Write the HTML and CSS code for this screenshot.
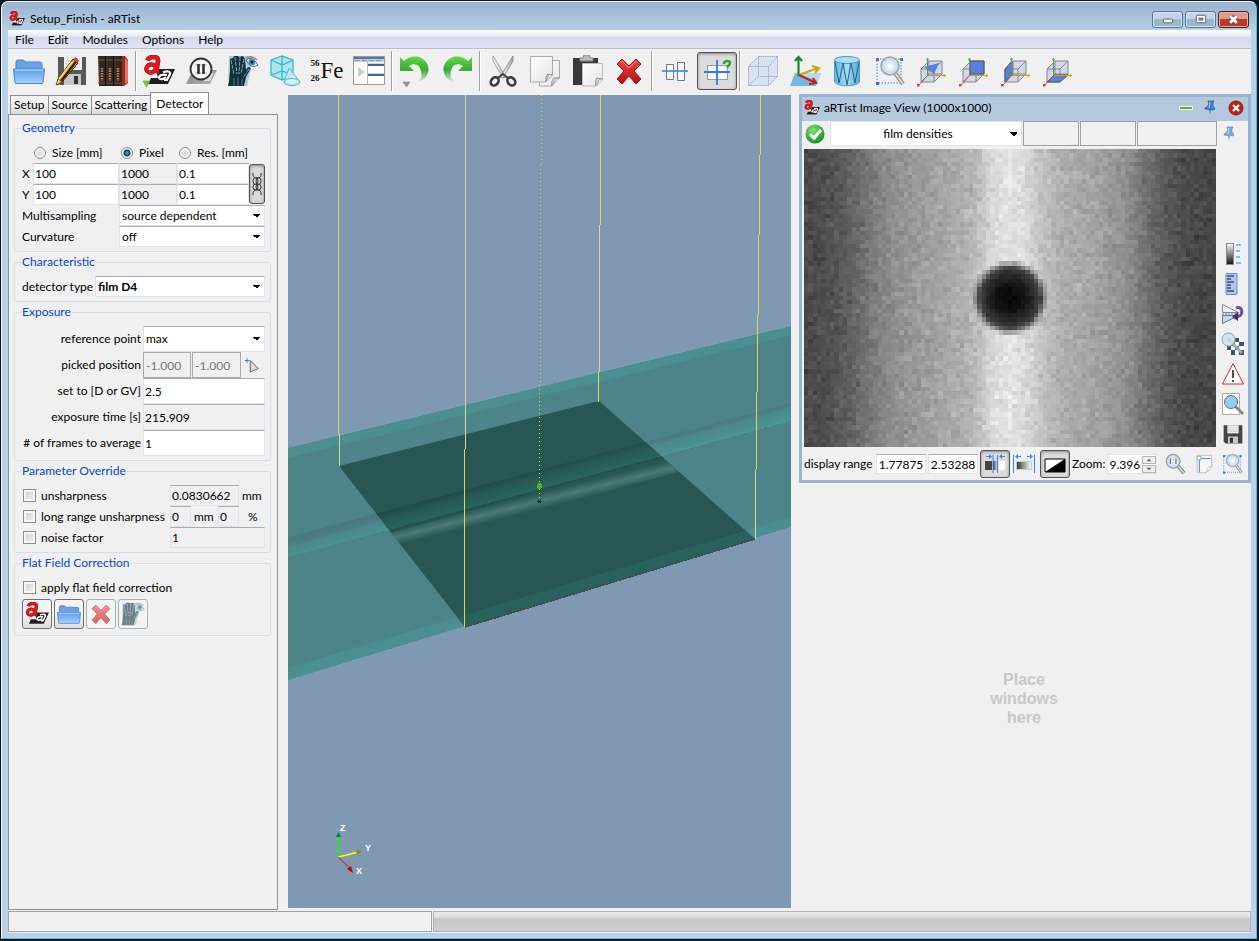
FILE: index.html
```html
<!DOCTYPE html>
<html lang="en">
<head>
<meta charset="utf-8">
<title>Setup_Finish - aRTist</title>
<link rel="stylesheet" href="styles.css">
</head>
<body>
<svg class="defs" aria-hidden="true">
  <defs>
    <linearGradient id="gFolder" x1="0" y1="0" x2="0" y2="1"><stop offset="0" stop-color="#5d9df0"/><stop offset="1" stop-color="#a9d0fb"/></linearGradient>
    <linearGradient id="gGreen" x1="0" y1="0" x2="0" y2="1"><stop offset="0" stop-color="#5fdc3e"/><stop offset=".5" stop-color="#3aa838"/><stop offset="1" stop-color="#3aa838" stop-opacity="0"/></linearGradient>
    <linearGradient id="gRed" x1="0" y1="0" x2="0" y2="1"><stop offset="0" stop-color="#ee4a45"/><stop offset="1" stop-color="#b80a0a"/></linearGradient>
    <linearGradient id="gPaper" x1="0" y1="0" x2="1" y2="1"><stop offset="0" stop-color="#fff"/><stop offset="1" stop-color="#e4e4e4"/></linearGradient>
    <linearGradient id="gCyl" x1="0" y1="0" x2="1" y2="0"><stop offset="0" stop-color="#58b8e4"/><stop offset=".5" stop-color="#a5dcf5"/><stop offset="1" stop-color="#4fa8d8"/></linearGradient>
    <linearGradient id="gGrayH" x1="0" y1="0" x2="1" y2="0"><stop offset="0" stop-color="#333"/><stop offset="1" stop-color="#fff"/></linearGradient>
    <linearGradient id="gGrayV" x1="0" y1="0" x2="0" y2="1"><stop offset="0" stop-color="#fff"/><stop offset="1" stop-color="#111"/></linearGradient>
    <linearGradient id="gBlade" x1="0" y1="0" x2="1" y2="0"><stop offset="0" stop-color="#fff"/><stop offset="1" stop-color="#aaa"/></linearGradient>
    <linearGradient id="gShadow" x1="0" y1="0" x2="1" y2="1"><stop offset="0" stop-color="#808080"/><stop offset="1" stop-color="#b4b4b4"/></linearGradient>
    <radialGradient id="gLens"><stop offset="0" stop-color="#fff"/><stop offset="1" stop-color="#b9d3e6"/></radialGradient>
    <radialGradient id="gOk" cx=".4" cy=".3" r=".8"><stop offset="0" stop-color="#7de070"/><stop offset="1" stop-color="#118a1c"/></radialGradient>

    <symbol id="logo" viewBox="0 0 32 32">
      <path d="M13 14h19l-7 15H5z" fill="#fff"/>
      <path d="M13 14h19l-7 15H5l3-6h7z" fill="#1c1c1c"/>
      <path d="M20 17c4-1 8-1 7 2l-3 6h-3M24 20c-4-1-8 0-8 2.500s5 2 7-.5" fill="none" stroke="#fff" stroke-width="2.200"/>
      <path d="M4.500 5.500q1-3.500 6-3.500t4.500 4l-1.500 9q0 2 2.500 1.500" fill="none" stroke="#7d0808" stroke-width="4.600"/><ellipse cx="8" cy="13.500" rx="4.800" ry="4" transform="rotate(-15 8 13.500)" fill="none" stroke="#7d0808" stroke-width="4.200"/>
      <path d="M4.500 5.500q1-3.500 6-3.500t4.500 4l-1.500 9q0 2 2.500 1.500" fill="none" stroke="#e8151a" stroke-width="3.800"/><ellipse cx="8" cy="13.500" rx="4.800" ry="4" transform="rotate(-15 8 13.500)" fill="none" stroke="#e8151a" stroke-width="3.400"/>
    </symbol>
    <symbol id="folder" viewBox="0 0 32 32">
      <path d="M3 7q0-2 2-2h5l3 2h14q2 0 2 2v7H3z" fill="#6aa2e8" stroke="#4a80c8"/>
      <path d="M.5 14h31l-1.500 13.500q0 1-1 1H3q-1 0-1-1z" fill="url(#gFolder)" stroke="#4b86d3"/>
      <path d="M2 15h28" stroke="#c8e2ff"/>
    </symbol>
    <symbol id="disk" viewBox="0 0 32 32">
      <path d="M1 2h30v29H4l-3-3z" fill="#454547"/>
      <path d="M7 2h18v13H7z" fill="#eceff3"/><path d="M7 6h18M7 9h18M7 12h18" stroke="#c2ccd6"/>
      <path d="M8 20h16v11H8z" fill="#c9c9cc"/><path d="M11 22h5v8h-5z" fill="#333"/>
    </symbol>
    <symbol id="save" viewBox="0 0 32 32">
      <path d="M3 2h28v28H5l-2-2z" fill="#58585a"/><path d="M9 2h18v13H9z" fill="#eef2f5"/>
      <path d="M11 6h14M11 9h14M11 12h14" stroke="#c4d0dc"/><path d="M9 19h17v11H9z" fill="#c5c5c8"/><path d="M19 21h4v8h-4z" fill="#333"/>
      <path d="M18 4l5 4L7 27l-5 3 1-6z" fill="#f3b91f" stroke="#2c2000"/><path d="M17 7L4 24" stroke="#ffe069" stroke-width="1.500"/>
      <path d="M21 6.500L6 26" stroke="#1d1a10" stroke-width="2.200"/><path d="M18 4l3-2 3 4-2 2z" fill="#e33"/><path d="M1 30l2-6 4 3z" fill="#f0d060" stroke="#443311" stroke-width=".6"/>
    </symbol>
    <symbol id="books" viewBox="0 0 32 32">
      <path d="M25 1h3l3 4v23l-4 3h-3z" fill="#a92420"/><path d="M28 3l3 3v21l-3 2z" fill="#cf7a6a"/>
      <path d="M1 1h7v30H2zM9 1h7v30H9zM17 1h8v30h-8z" fill="#33261e"/>
      <path d="M1 5h7M1 28h7M9 5h7M9 28h7M17 5h8M17 28h8" stroke="#7a5a42"/>
      <path d="M2.500 2v28M10.500 2v28M18.500 2v28" stroke="#4b382c"/>
      <path d="M5 13v13M13 13v13M21 13v13" stroke="#b8805e" stroke-width="2.500" stroke-dasharray="1.500 1"/>
      <path d="M8.500 1v30M16.500 1v30" stroke="#120b07"/>
    </symbol>
    <symbol id="pause" viewBox="0 0 32 32">
      <path d="M8 15h24l-7 14H1z" fill="url(#gShadow)"/><path d="M23 18h6l-4 8h-6z" fill="#dedede"/>
      <circle cx="16" cy="14" r="10.500" fill="#f4f4f4" stroke="#333" stroke-width="1.800"/>
      <path d="M10 10h12M10 18h12" stroke="#bbb"/><path d="M13.500 9v10M18.500 9v10" stroke="#333" stroke-width="2.600"/>
    </symbol>
    <symbol id="hand" viewBox="0 0 32 32">
      <path d="M2 1h19l3 14-4 16H1z" fill="#aecdd6"/>
      <path d="M1 31c2-6 1-10 2-14L3 4l3-1 1-2h4l1 1 4-1 2 3 1 11 2-3 3 1-5 9-2 9z" fill="#12303e"/>
      <path d="M4 5l3 14M8 2l2 17M13 2l-1 17M17 4l-3 15M22 14l-6 9" stroke="#7fa9b7" stroke-width="1" stroke-dasharray="4 1"/>
      <path d="M7 23v8M11 22v9M15 24v7" stroke="#4c7c8c"/>
      <path d="M19 5q6-5 12 5-7 5-12-5z" fill="#eef5f8" stroke="#666"/><circle cx="25" cy="7" r="3.500" fill="#3c8dbd"/><circle cx="25" cy="7" r="1.500" fill="#123"/><path d="M19 3q6-3 11 2" fill="none" stroke="#a58a72" stroke-width="1.500"/>
    </symbol>
    <symbol id="solids" viewBox="0 0 32 32">
      <path d="M2 5l11-4 11 4v15l-11 5-11-5z" fill="#aee4ee"/><path d="M2 5l11 5 11-5M13 10v15M2 5l11-4 11 4v15l-11 5-11-5zM2 20l11-4 11 4M13 1v15" fill="none" stroke="#35b6d2" stroke-width="1.300"/>
      <path d="M20 13l-5 14q6 6 16 0z" fill="#c5ecf3" fill-opacity=".9" stroke="#55b9cd"/><ellipse cx="23" cy="27" rx="8" ry="3.500" fill="#d8f1f5" fill-opacity=".7" stroke="#55b9cd"/>
    </symbol>
    <symbol id="panel" viewBox="0 0 32 32">
      <path d="M.5 1.500h31v28H.5z" fill="#fff" stroke="#999"/><path d="M1 2h30v2H1z" fill="#5277aa"/><path d="M1 4h30v3H1z" fill="#c3cad4"/><path d="M2 5.500h26" stroke="#8d98a8" stroke-dasharray="5 2"/>
      <path d="M14.500 7v22" stroke="#bbb"/><path d="M15 8h16v3H15zM15 18h16v3H15z" fill="#cad5e6"/><path d="M15 10h16M15 20h16" stroke="#41679d" stroke-width="2"/><path d="M5 12l7 5-7 5z" fill="#b6dcb8"/>
    </symbol>
    <symbol id="undo" viewBox="0 0 32 32">
      <path d="M1 2v14h14l-5-5c6-4 14-1 12 12l-4 5c13-4 16-19 4-25C16 0 9 2 5 6z" fill="url(#gGreen)"/><path d="M4 27h7l-3.500 5z" fill="#999" stroke="#777" stroke-width=".5"/>
    </symbol>
    <symbol id="redo" viewBox="0 0 32 32">
      <path d="M31 2v14H17l5-5c-6-4-14-1-12 12l4 5C1 24-2 9 10 3c6-3 13-1 17 3z" fill="url(#gGreen)"/>
    </symbol>
    <symbol id="cut" viewBox="0 0 32 32">
      <path d="M6 1l13 21-3 1L6 6z" fill="url(#gBlade)" stroke="#888" stroke-width=".7"/><path d="M26 1L13 22l3 1L26 6z" fill="url(#gBlade)" stroke="#777" stroke-width=".7"/>
      <ellipse cx="8" cy="26.500" rx="3.500" ry="4.500" transform="rotate(40 8 26)" fill="none" stroke="#3c3f42" stroke-width="2.600"/><ellipse cx="24" cy="26.500" rx="3.500" ry="4.500" transform="rotate(-40 24 26)" fill="none" stroke="#3c3f42" stroke-width="2.600"/>
      <path d="M11 23l5-4 5 4" fill="none" stroke="#3c3f42" stroke-width="2"/>
    </symbol>
    <symbol id="copy" viewBox="0 0 32 32">
      <path d="M10.500 5.500h20V23l-8 8h-12z" fill="url(#gPaper)" stroke="#aaa"/><path d="M1.500 1.500h22V20l-7 7h-15z" fill="url(#gPaper)" stroke="#aaa"/>
      <path d="M23.500 20c-5-2-4 2-7 7q0-6 2-8z" fill="#ddd" stroke="#999"/><path d="M30.500 23c-5-2-4 3-8 8q0-6 2-8z" fill="#ddd" stroke="#999"/>
    </symbol>
    <symbol id="paste" viewBox="0 0 32 32">
      <path d="M2 3h25v27H2z" fill="#39393b"/><path d="M9 3h3l1-3h5l1 3h3v3H9z" fill="#bbb" stroke="#888"/>
      <path d="M11.500 8.500h20V25l-6 6h-14z" fill="url(#gPaper)" stroke="#bbb"/><path d="M31.500 24c-5-1-3 3-7 7q0-6 1-8z" fill="#ddd" stroke="#999"/>
    </symbol>
    <symbol id="del" viewBox="0 0 32 32">
      <path d="M9 4l7 7 7-7 5 5-7 7 7 8-5 5-7-8-7 8-5-5 7-8-7-7z" fill="url(#gRed)" stroke="#9c1414" stroke-linejoin="round"/><path d="M9 6l7 7 7-7" fill="none" stroke="#ffaaa5" stroke-opacity=".7"/>
    </symbol>
    <symbol id="align" viewBox="0 0 32 32">
      <path d="M7.500 9.500h7v15h-7zM18.500 7.500h7v18h-7z" fill="#fafafa" stroke="#777"/><path d="M3 16h26" stroke="#2b88ff" stroke-width="1.600"/>
    </symbol>
    <symbol id="alignq" viewBox="0 0 32 32">
      <path d="M6.500 10.500h20v14h-20z" fill="#fafafa" stroke="#999"/><path d="M3 17h26M16 5v25" stroke="#2b7bee" stroke-width="1.800"/><path d="M23 9c0-4 7-4 6-.5-1 2-2 2-3 4" fill="none" stroke="#35a53a" stroke-width="2.600"/>
    </symbol>
    <symbol id="wirebox" viewBox="0 0 32 32">
      <path d="M1.500 11.500l10-10h19v20l-9 9h-20z" fill="#dbe3f0"/><path d="M1.500 11.500h20v19h-20zM11.500 1.500h19v20h-19zM1.500 11.500l10-10M21.500 11.500l9-10M21.500 30.500l9-9M1.500 30.500l10-9" fill="none" stroke="#94abd6" stroke-dasharray="1.500 .7"/>
    </symbol>
    <symbol id="axes" viewBox="0 0 32 32">
      <path d="M6 18h26l-5 13H1z" fill="#76b6e2"/><path d="M6 18h26l-3 8z" fill="#b3d8f0"/>
      <path d="M9.500 21V3M6 6l3.500-4L13 6" fill="none" stroke="#168a2c" stroke-width="2.200"/><path d="M10 20l19-7M23 11l7 2-4 5" fill="none" stroke="#c9a90b" stroke-width="2.200"/><path d="M10 20l17 8M24 23l3 5-7 1" fill="none" stroke="#c01f26" stroke-width="2.200"/>
    </symbol>
    <symbol id="cyl" viewBox="0 0 32 32">
      <path d="M3.500 5v22c3 5 22 5 25 0V5z" fill="url(#gCyl)" stroke="#55a2cc"/><ellipse cx="16" cy="5" rx="12.500" ry="3.500" fill="#a9e0f7" stroke="#4798c5"/><path d="M4 7l4 21 4-20 4 22 4-22 4 20 4-21" fill="none" stroke="#2c5f7e"/>
    </symbol>
    <symbol id="zoomsel" viewBox="0 0 32 32">
      <path d="M4 4h24v24H4z" fill="none" stroke="#4c77bd" stroke-dasharray="1.500 1.500"/><path d="M3 3h3v3H3zM27 3h3v3h-3zM3 27h3v3H3z" fill="#2b7bee"/>
      <path d="M22 18l8 11" stroke="#888" stroke-width="4"/><path d="M22 18l8 11" stroke="#ddd" stroke-width="2"/><circle cx="17" cy="11" r="9" fill="url(#gLens)" stroke="#a2a7ac" stroke-width="1.600"/>
    </symbol>
    <symbol id="cubebase" viewBox="0 0 32 32">
      <path d="M6 14l8-8h13v13l-8 8H6z" fill="#d3d7e8"/><path d="M6 14h13v13H6zM14 6h13v13H14zM6 14l8-8M19 14l8-8M19 27l8-8M6 27l8-8" fill="none" stroke="#84858c"/>
    </symbol>
    <symbol id="cubeaxes" viewBox="0 0 32 32">
      <path d="M12.500 20V4" stroke="#5a9b63"/><path d="M11.500 5l1-2 1 2z" fill="#22d13c" stroke="#22d13c"/><path d="M13 20.500h17" stroke="#bba51c"/><path d="M29 19.500l2 1-2 1z" fill="#d9a915" stroke="#d9a915"/><path d="M13 20L4 30" stroke="#b65050"/><path d="M2 29h2.500v2.500H2z" fill="#f33"/>
    </symbol>
    <symbol id="pin" viewBox="0 0 16 16">
      <path d="M6 1h6l-1 2v3l2 3-1 1-9-1v-1l3-2 1-3-1-1z" fill="#3d83c9" stroke="#1f5796" stroke-width=".7"/><path d="M8 2L7 8" stroke="#a6d0f5"/><path d="M7 10h2l-1 5z" fill="#777"/>
    </symbol>
    <symbol id="lens" viewBox="0 0 24 24"><path d="M15 14l7 8" stroke="#777" stroke-width="4"/><path d="M15 14l7 8" stroke="#d4d4d4" stroke-width="2"/><circle cx="10" cy="9" r="7.500" fill="url(#gLens)" stroke="#9aa0a6" stroke-width="1.500"/></symbol>
  </defs>
</svg>

<div class="window">
  <header class="titlebar">
    <svg class="i16"><use href="#logo"/></svg>
    <h1 class="title">Setup_Finish - aRTist</h1>
    <div class="winbtns">
      <button class="winbtn" aria-label="Minimize"><svg viewBox="0 0 30 16"><rect x="10.500" y="7.500" width="10" height="4" rx="1" fill="#fff" stroke="#555c6e"/></svg></button>
      <button class="winbtn" aria-label="Restore"><svg viewBox="0 0 30 16"><rect x="10.500" y="3.500" width="10" height="8" rx="1" fill="#fff" stroke="#555c6e"/><rect x="13.500" y="6.500" width="4" height="2" fill="#8fb0d4" stroke="#555c6e"/></svg></button>
      <button class="winbtn winbtn-close" aria-label="Close"><svg viewBox="0 0 30 16"><path d="M11.500 4.500l7 7M18.500 4.500l-7 7" stroke="#555c6e" stroke-width="5"/><path d="M11.500 4.500l7 7M18.500 4.500l-7 7" stroke="#fff" stroke-width="3"/></svg></button>
    </div>
  </header>

  <div class="client">
    <nav class="menubar">
      <button>File</button><button>Edit</button><button>Modules</button><button>Options</button><button>Help</button>
    </nav>

    <div class="toolbar">
      <button class="tool" aria-label="Open"><svg><use href="#folder"/></svg></button>
      <button class="tool" aria-label="Save"><svg><use href="#save"/></svg></button>
      <button class="tool" aria-label="Library"><svg><use href="#books"/></svg></button>
      <span class="sep"></span>
      <button class="tool" aria-label="Compute"><svg viewBox="0 0 32 32"><use href="#logo"/><path d="M0 26h7l-3.500 6z" fill="#6cd62c" stroke="#3d9a14" stroke-width=".5"/></svg></button>
      <button class="tool" aria-label="Pause"><svg><use href="#pause"/></svg></button>
      <button class="tool" aria-label="Radiograph"><svg><use href="#hand"/></svg></button>
      <button class="tool" aria-label="Solids"><svg><use href="#solids"/></svg></button>
      <button class="tool tool-fe" aria-label="Materials"><span class="iso"><span>56</span><span>26</span></span><span class="fe">Fe</span></button>
      <button class="tool" aria-label="Panels"><svg><use href="#panel"/></svg></button>
      <span class="sep"></span>
      <button class="tool" aria-label="Undo"><svg><use href="#undo"/></svg></button>
      <button class="tool" aria-label="Redo"><svg><use href="#redo"/></svg></button>
      <span class="sep"></span>
      <button class="tool" aria-label="Cut"><svg><use href="#cut"/></svg></button>
      <button class="tool" aria-label="Copy"><svg><use href="#copy"/></svg></button>
      <button class="tool" aria-label="Paste"><svg><use href="#paste"/></svg></button>
      <button class="tool" aria-label="Delete"><svg><use href="#del"/></svg></button>
      <span class="sep"></span>
      <button class="tool" aria-label="Align"><svg><use href="#align"/></svg></button>
      <button class="tool tool-on" aria-label="Snap" aria-pressed="true"><svg><use href="#alignq"/></svg></button>
      <span class="sep"></span>
      <button class="tool" aria-label="Wireframe"><svg><use href="#wirebox"/></svg></button>
      <button class="tool" aria-label="Axes"><svg><use href="#axes"/></svg></button>
      <button class="tool" aria-label="Cylinder"><svg><use href="#cyl"/></svg></button>
      <button class="tool" aria-label="Zoom to selection"><svg><use href="#zoomsel"/></svg></button>
      <button class="tool" aria-label="Free view"><svg viewBox="0 0 32 32"><use href="#cubebase"/><path d="M9 12l15-4-5 11z" fill="#5b7fdc"/><use href="#cubeaxes"/></svg></button>
      <button class="tool" aria-label="Back view"><svg viewBox="0 0 32 32"><use href="#cubebase"/><path d="M13 6h14v13H13z" fill="#5b7fdc" stroke="#555"/><use href="#cubeaxes"/></svg></button>
      <button class="tool" aria-label="Side view"><svg viewBox="0 0 32 32"><use href="#cubebase"/><path d="M6 14l7-8v14l-7 7z" fill="#5b7fdc" stroke="#555"/><use href="#cubeaxes"/></svg></button>
      <button class="tool" aria-label="Bottom view"><svg viewBox="0 0 32 32"><use href="#cubebase"/><path d="M6 27l7-7h14l-8 7z" fill="#5b7fdc" stroke="#555"/><use href="#cubeaxes"/></svg></button>
    </div>

    <main class="main">
      <section class="side">
        <div class="tabs" role="tablist">
          <button class="tab" role="tab">Setup</button><button class="tab" role="tab">Source</button><button class="tab" role="tab">Scattering</button><button class="tab tab-on" role="tab" aria-selected="true">Detector</button>
        </div>
        <form class="page">
          <fieldset>
            <legend>Geometry</legend>
            <div class="geo">
              <label class="radio radio-size"><input type="radio" name="fix">Size [mm]</label>
              <label class="radio"><input type="radio" name="fix" checked>Pixel</label>
              <label class="radio radio-res"><input type="radio" name="fix">Res. [mm]</label>
              <label for="x1">X</label><input id="x1" value="100"><input class="ro" aria-label="X pixel" value="1000" readonly><input aria-label="X resolution" value="0.1">
              <button type="button" class="chain" aria-label="Link X and Y"><svg viewBox="0 0 10 26"><path d="M1 2v2q0 2 2 3h4q2-1 2-3V2M1 24v-2q0-2 2-3h4q2 1 2 3v2" fill="none" stroke="#333"/><ellipse cx="3.500" cy="10" rx="2.500" ry="3.500" fill="none" stroke="#333"/><ellipse cx="6.500" cy="10" rx="2.500" ry="3.500" fill="none" stroke="#333"/><ellipse cx="3.500" cy="16" rx="2.500" ry="3" fill="none" stroke="#333"/><ellipse cx="6.500" cy="16" rx="2.500" ry="3" fill="none" stroke="#333"/></svg></button>
              <label for="y1">Y</label><input id="y1" value="100"><input class="ro" aria-label="Y pixel" value="1000" readonly><input aria-label="Y resolution" value="0.1">
              <label class="span2" for="ms">Multisampling</label><select class="span3" id="ms"><option>source dependent</option></select>
              <label class="span2" for="cv">Curvature</label><select class="span3" id="cv"><option>off</option></select>
            </div>
          </fieldset>
          <fieldset>
            <legend>Characteristic</legend>
            <div class="row"><label class="wlabel" for="dt">detector type</label><select class="grow strong" id="dt"><option>film D4</option></select></div>
          </fieldset>
          <fieldset>
            <legend>Exposure</legend>
            <div class="expo">
              <label for="rp">reference point</label><select id="rp"><option>max</option></select>
              <label for="pp">picked position</label>
              <div class="pick"><input id="pp" class="off" value="-1.000" disabled><input class="off" aria-label="picked y" value="-1.000" disabled>
                <button type="button" class="plain" aria-label="Pick"><svg viewBox="0 0 18 18"><path d="M1 4h5M3.500 1.500v5" stroke="#36c"/><path d="M7 4v13l9-4z" fill="#ddd" stroke="#555"/></svg></button></div>
              <label for="st">set to [D or GV]</label><input id="st" value="2.5">
              <label for="et">exposure time [s]</label><input id="et" class="ro" value="215.909" readonly>
              <label for="nf"># of frames to average</label><input id="nf" value="1">
            </div>
          </fieldset>
          <fieldset>
            <legend>Parameter Override</legend>
            <div class="row"><label class="check"><input type="checkbox">unsharpness</label><input class="ro w69" aria-label="unsharpness value" value="0.0830662" readonly><span class="unit">mm</span></div>
            <div class="row"><label class="check"><input type="checkbox">long range unsharpness</label><input class="ro w21" aria-label="range" value="0" readonly><span class="unit unit-mid">mm</span><input class="ro w21" aria-label="percent" value="0" readonly><span class="unit unit-pct">%</span></div>
            <div class="row"><label class="check"><input type="checkbox">noise factor</label><input class="ro grow" aria-label="noise value" value="1" readonly></div>
          </fieldset>
          <fieldset>
            <legend>Flat Field Correction</legend>
            <div class="row"><label class="check"><input type="checkbox">apply flat field correction</label></div>
            <div class="flat">
              <button type="button" class="sq" aria-label="Compute"><svg><use href="#logo"/></svg></button>
              <button type="button" class="sq" aria-label="Open"><svg><use href="#folder"/></svg></button>
              <button type="button" class="sq" aria-label="Remove" disabled><svg><use href="#del"/></svg></button>
              <button type="button" class="sq" aria-label="Show" disabled><svg><use href="#hand"/></svg></button>
            </div>
          </fieldset>
        </form>
      </section>

      <svg class="view" viewBox="288 95 503 813" preserveAspectRatio="xMidYMid slice" shape-rendering="crispEdges">
        <defs>
          <clipPath id="film"><path d="M339 466l260-65 156 138-290 88z"/></clipPath>
          <linearGradient id="groove" gradientUnits="userSpaceOnUse" x1="540" y1="470" x2="545" y2="488"><stop offset="0" stop-color="#4c7880"/><stop offset=".3" stop-color="#4b7f85"/><stop offset=".4" stop-color="#4b898c"/><stop offset=".8" stop-color="#4b9091"/><stop offset="1" stop-color="#4b9694"/></linearGradient>
          <linearGradient id="grooveIn" gradientUnits="userSpaceOnUse" x1="540" y1="470" x2="545" y2="488"><stop offset="0" stop-color="#224c4c"/><stop offset=".4" stop-color="#275a56"/><stop offset="1" stop-color="#286660"/></linearGradient>
          <linearGradient id="shine" gradientUnits="userSpaceOnUse" x1="534" y1="494" x2="538" y2="510"><stop offset="0" stop-color="#4b7a74" stop-opacity="0"/><stop offset=".5" stop-color="#4b7a74"/><stop offset="1" stop-color="#4b7a74" stop-opacity="0"/></linearGradient>
        </defs>
        <path d="M-400 95h1900v813h-1900z" fill="#8099b3"/>
        <path d="M288 448l503-122v201L288 680z" fill="#4c8f90"/>
        <path d="M288 458l503-123v182L288 668z" fill="#4d848a"/>
        <path d="M288 537l503-134v18L288 557z" fill="url(#groove)"/>
        <path d="M288 559l503-138" stroke="#3b6f76" stroke-dasharray="1 10"/>
        <g clip-path="url(#film)">
          <path d="M330 395h430v240H330z" fill="#285652"/>
          <path d="M288 668l503-151v30L288 690z" fill="#29625c"/>
          <path d="M288 537l503-134v18L288 557z" fill="url(#grooveIn)"/>
          <path d="M288 559l503-137" stroke="#1f4a48" stroke-dasharray="2 1"/>
          <path d="M380 536l320-88v18l-320 88z" fill="url(#shine)"/>
        </g>
        <path d="M465 627l290-88" stroke="#474a52" stroke-width="1.500"/>
        <g fill="none" stroke="#ecd050">
          <path d="M338.500 95v338M339.500 433v33M465.500 95v354M464.500 449v178M600.500 95v130M599.500 225v147M598.500 372v30M760.500 95v60M759.500 155v80M758.500 235v80M757.500 315v77M756.500 392v77M755.500 469v70"/>
          <path d="M541.500 95v70M540.500 165v220M539.500 385v115" stroke-dasharray="1 3"/>
        </g>
        <g stroke="#c8dce4"><path d="M465.500 95v354M755.500 469v70M339.500 440v24M599.500 225v147" stroke-opacity=".5"/></g>
        <circle cx="539.500" cy="486" r="3" fill="#45b81b"/><ellipse cx="539.500" cy="501.500" rx="2.500" ry="1.500" fill="#12403c"/>
        <g shape-rendering="auto">
          <path d="M338.500 857v-23" stroke="#0f0" stroke-width="1.500"/><path d="M336 837l2.500-5 2.500 5z" fill="#082"/>
          <path d="M338.500 857l20-5" stroke="#ff0" stroke-width="1.500"/><path d="M356 850l6 1.500-5 3z" fill="#880"/>
          <path d="M338.500 857l12 12" stroke="#d00"/><path d="M347 869l4-3 2 7z" fill="#c00"/>
          <g class="axis"><text x="340" y="831">Z</text><text x="365" y="851">Y</text><text x="356" y="874">X</text></g>
        </g>
      </svg>

      <section class="dock">
        <article class="imgwin">
          <header class="imgtitle">
            <svg class="i16"><use href="#logo"/></svg><h2 class="title">aRTist Image View (1000x1000)</h2>
            <button class="plain" aria-label="Collapse"><svg viewBox="0 0 16 16"><rect x="1" y="6" width="14" height="4" rx="1" fill="#fff"/><rect x="2" y="7" width="12" height="2" fill="#57b81c"/></svg></button>
            <button class="plain" aria-label="Pin"><svg><use href="#pin"/></svg></button>
            <button class="plain last" aria-label="Close"><svg viewBox="0 0 16 16"><circle cx="8" cy="8" r="7" fill="#c3200e" stroke="#8b1a10"/><path d="M5 5l6 6M11 5l-6 6" stroke="#fff" stroke-width="2.400"/></svg></button>
          </header>
          <div class="imgbar">
            <svg class="ok" viewBox="0 0 20 20"><circle cx="10" cy="10" r="9.500" fill="url(#gOk)"/><path d="M5 10l4 4 7-8" fill="none" stroke="#fff" stroke-width="3"/></svg>
            <select class="mode" aria-label="Display mode"><option>film densities</option></select>
            <output class="cell"></output><output class="cell"></output><output class="cell cell-wide"></output>
            <button class="plain faint" aria-label="Pin"><svg><use href="#pin"/></svg></button>
          </div>
          <div class="imgbody">
            <canvas id="film-image" class="film" width="95" height="69"></canvas>
            <div class="strip">
              <button class="plain" aria-label="Histogram"><svg viewBox="0 0 24 24"><rect x="5.500" y="1.500" width="7" height="21" fill="url(#gGrayV)" stroke="#888"/><path d="M15 3h5M15 9h4M15 15h4M15 21h5" stroke="#2b7bee"/></svg></button>
              <button class="plain" aria-label="Ruler"><svg viewBox="0 0 24 24"><rect x="5" y="1.500" width="11" height="21" rx="1" fill="#a9c8f4" stroke="#5f8fd0"/><path d="M6 4h7M6 7h4M6 10h7M6 13h4M6 16h4M6 19h7" stroke="#112"/></svg></button>
              <button class="plain" aria-label="Flip"><svg viewBox="0 0 24 24"><path d="M1.500 2.500v8h16z" fill="#f2f2f2" stroke="#888"/><path d="M1.500 21.500v-8h16z" fill="#c6dcf2" stroke="#678"/><path d="M1 12h19" stroke="#2b7bee" stroke-dasharray="2 1"/><path d="M15 6c6-3 9 7 1 9" fill="none" stroke="#6a4a9c" stroke-width="3"/><path d="M11 15l6-5v9z" fill="#4a2a78"/></svg></button>
              <button class="plain" aria-label="Filter"><svg viewBox="0 0 24 24"><path d="M6 6h17v17H6z" fill="#f8fafc"/><path d="M6 6h4v4H6zM14 6h4v4h-4zM10 10h4v4h-4zM18 10h5v4h-5zM6 14h4v4H6zM14 14h4v4h-4zM10 18h4v5h-4zM18 18h5v5h-5z" fill="#3b5676"/><circle cx="7.500" cy="7.500" r="6.500" fill="#cfe2f1" fill-opacity=".9" stroke="#97a3ae"/><path d="M12 12l9 9" stroke="#aaa" stroke-width="3"/></svg></button>
              <button class="plain" aria-label="Warning"><svg viewBox="0 0 24 24"><path d="M12 1.500l10.500 20.500h-21z" fill="#fff" stroke="#d22"/><path d="M12 8v8M12 18v2" stroke="#222" stroke-width="1.600"/></svg></button>
              <button class="plain" aria-label="Inspect"><svg viewBox="0 0 24 24"><path d="M1.500 1.500h17v21h-17z" fill="#fff" stroke="#aaa"/><path d="M14 14l8 8" stroke="#888" stroke-width="3"/><circle cx="10" cy="10" r="6.500" fill="#8bd2ee" stroke="#668"/></svg></button>
              <button class="plain" aria-label="Save"><svg><use href="#disk"/></svg></button>
            </div>
          </div>
          <div class="imgfoot">
            <label class="rlabel" for="dr">display range</label><input id="dr" class="w51" value="1.77875"><input class="w51" aria-label="upper" value="2.53288">
            <button class="plain sqon" aria-label="Narrow range"><svg viewBox="0 0 24 24"><rect x="2" y="9" width="7" height="9" fill="#444"/><rect x="10" y="9" width="5" height="9" fill="url(#gGrayH)"/><rect x="16" y="9" width="6" height="9" fill="#fff"/><path d="M10 3v18M14.500 3v18M3 4.500h5M22 4.500h-5" stroke="#2b88ff"/><path d="M6 2l3 2.500-3 2.500zM19 2l-3 2.500 3 2.500z" fill="#2b88ff"/></svg></button>
            <button class="plain foot" aria-label="Widen range"><svg viewBox="0 0 24 24"><rect x="4.500" y="9.500" width="15" height="8" fill="url(#gGrayH)" stroke="#ccc"/><path d="M1.500 3v18M22.500 3v18M5 4.500h4M19 4.500h-4" stroke="#2b88ff"/><path d="M6 2L3 4.500 6 7zM18 2l3 2.500L18 7z" fill="#2b88ff"/></svg></button>
            <button class="plain sqon" aria-label="Invert"><svg viewBox="0 0 24 24"><path d="M2 7h20v13H2z" fill="#fff" stroke="#000"/><path d="M2 20L22 7v13z"/></svg></button>
            <label for="zm">Zoom:</label><span class="spin"><input id="zm" value="9.396"><span class="spinb"><button aria-label="Increase"><svg viewBox="0 0 14 7"><path d="M4 5h6L7 2z" fill="#5562a0"/></svg></button><button aria-label="Decrease"><svg viewBox="0 0 14 7"><path d="M4 2h6L7 5z" fill="#5562a0"/></svg></button></span></span>
            <span class="tail">
              <button class="plain" aria-label="Zoom 1:1"><svg viewBox="0 0 24 24"><use href="#lens"/><path d="M7 6v6M13 6v6M10 7v1M10 10v1" stroke="#456"/></svg></button>
              <button class="plain" aria-label="Fit window"><svg viewBox="0 0 24 24"><path d="M4.500 2.500h16v13l-6 6h-10z" fill="#f6f6f6" stroke="#bbb"/><path d="M20 15c-5 0-4 2-6 7" fill="none" stroke="#bbb"/><path d="M7 6v15M7 6h12" stroke="#2b88ff"/><rect x="4.500" y="3.500" width="4" height="4" fill="#fff" stroke="#aaa"/></svg></button>
              <button class="plain" aria-label="Zoom selection"><svg><use href="#zoomsel"/></svg></button>
            </span>
          </div>
        </article>
        <p class="hint">Place<br>windows<br>here</p>
      </section>
    </main>

    <footer class="status"><div class="msg"></div><div class="bar"></div></footer>
  </div>
</div>
<script src="film.js"></script>
</body>
</html>
```

FILE: styles.css
```css
* { box-sizing: border-box; }
html, body { margin: 0; }
body {
  min-height: 100vh;
  display: flex;
  background: #10141a;
  padding: 1px 2px 2px 1px;
  font: 12px/16px Lato, "Open Sans", sans-serif;
  color: #000;
}
button, input, select { font: inherit; color: inherit; margin: 0; border-radius: 0; }
button { padding: 0; border: 0; background: none; }
h1, h2, p { margin: 0; font-weight: 400; font-size: 12px; }
svg { display: block; }
.defs { position: absolute; width: 0; height: 0; }

.window {
  flex: 1;
  min-width: 0;
  display: flex;
  flex-direction: column;
  padding: 0 5px 5px 6px;
  border: 1px solid #f0f6fc;
  border-right-color: #3cc4e4;
  border-bottom-color: #3cc4e4;
  border-radius: 7px 7px 0 0;
  background: linear-gradient(#98b2d0, #b9d1ea 30px);
}
.titlebar { height: 28px; display: flex; align-items: center; gap: 5px; padding: 6px 2px 0 1px; }
.i16 { width: 16px; height: 16px; }
.title { flex: 1; white-space: nowrap; }
.winbtns { display: flex; gap: 2px; }
.winbtn { width: 31px; height: 17px; border: 1px solid #5a7391; border-radius: 3px; background: linear-gradient(#c3d5e9 50%, #9bb5d3 50%); box-shadow: inset 0 0 0 1px #d7e5f3; }
.winbtn svg { width: 100%; height: 100%; }
.winbtn-close { border-color: #501a20; background: linear-gradient(#e29a8d 50%, #bb3a26 50%); box-shadow: inset 0 0 0 1px #eab0a4; }

.client { flex: 1; display: flex; flex-direction: column; background: #f0f0f0; min-width: 0; }
.menubar { height: 19px; display: flex; align-items: center; padding: 2px 0 0; background: linear-gradient(#fff, #e6eaf6 35%, #d5dbee 40%, #dfe4f4); border-bottom: 1px solid #b6bccc; }
.menubar button { padding: 0 7px; }
.toolbar { height: 45px; display: flex; align-items: center; padding-bottom: 1px; }
.tool { width: 42px; height: 40px; flex: none; display: flex; align-items: center; justify-content: center; }
.tool svg { width: 32px; height: 32px; overflow: visible; }
.tool-on, .sqon { border: 1px solid #555; border-radius: 3px; background: #dcdcdc; box-shadow: inset 0 1px 3px #888; }
.tool-on { width: 40px; height: 38px; margin: 0 1px; }
.sep { width: 4px; height: 40px; background: linear-gradient(#a0a0a0, #a0a0a0) 1px 0 / 1px 100% no-repeat, linear-gradient(#fff, #fff) 2px 0 / 1px 100% no-repeat; }
.tool-fe { font: 23px/32px "Liberation Serif", serif; color: #111; gap: 1px; }
.iso { display: flex; flex-direction: column; font-size: 9px; line-height: 15px; font-weight: 700; }

.main { flex: 1; display: grid; grid-template-columns: 270px minmax(0, 1fr) 452px; }
.side { display: flex; flex-direction: column; }
.tabs { display: flex; align-items: flex-end; height: 20px; padding-left: 2px; }
.tab { height: 19px; padding: 0 3px; border: 1px solid #8d8e98; border-bottom: 0; border-right-width: 0; background: linear-gradient(#f2f2f2 50%, #d8d8d8); }
.tab-on { height: 22px; padding: 0 5px; border-right-width: 1px; background: #fff; }
.page { flex: 1; border: 1px solid #8d8e98; padding: 5px 6px 5px 5px; }
fieldset { margin: 0 0 2px; padding: 6px 5px 4px 7px; border: 1px solid #d3dfe8; border-radius: 3px; min-width: 0; }
legend { color: #0046d5; padding: 0 1px; height: 16px; margin-left: -1px; }
label { white-space: nowrap; }
input:not([type]), select {
  appearance: none; width: 100%; min-width: 0; height: 100%;
  padding: 0 1px; background: #fff;
  border: 1px solid #e2e3ea; border-top-color: #abadb3; outline: 0;
}
input.ro, input.off { background: #f0f0f0; }
input.off { color: #777; border: 1px solid #aaa; padding: 0 2px; }
select {
  padding: 0 2px;
  background-image: linear-gradient(to top right, transparent 50%, #000 50%), linear-gradient(to top left, transparent 50%, #000 50%);
  background-size: 4px 4px;
  background-position: right 7px center, right 3px center;
  background-repeat: no-repeat;
}
input[type="radio"], input[type="checkbox"] { appearance: none; flex: none; border: 1px solid #8e8f8f; }
input[type="radio"] { width: 12px; height: 12px; border-radius: 50%; background: radial-gradient(#d4d8dc, #f6f6f6 80%); }
input[type="radio"]:checked { background: radial-gradient(circle, #3cb0e0 0, #0e3f66 3px, #eee 4px); }
input[type="checkbox"] { width: 13px; height: 13px; box-shadow: inset 0 0 0 2px #f6f6f6; background: linear-gradient(135deg, #c8ccd2, #f4f4f4); }

.geo { display: grid; grid-template-columns: 11px 86px 58px minmax(0, 1fr) 16px; grid-auto-rows: 21px; align-items: center; }
.radio { display: flex; align-items: center; gap: 6px; }
.geo .radio { padding-left: 2px; }
.geo .radio-size { grid-column: span 2; padding-left: 12px; }
.geo .radio-res { grid-column: span 2; }
.span2 { grid-column: span 2; }
.span3 { grid-column: span 3; }
.chain { grid-row: 2 / 4; grid-column: 5; width: 16px; height: 40px; border: 1px solid #555; border-radius: 3px; background: #d8d8d8; box-shadow: inset 0 1px 3px #888; display: flex; align-items: center; justify-content: center; }
.chain svg { width: 10px; height: 26px; }
.row { display: flex; height: 21px; align-items: center; gap: 1px; }
.grow { flex: 1; }
.wlabel { width: 72px; }
.strong { font-weight: 700; }
.expo { display: grid; grid-template-columns: minmax(0, 1fr) 122px; grid-auto-rows: 26px; column-gap: 2px; align-items: center; }
.expo label { text-align: right; }
.pick { height: 100%; display: grid; grid-template-columns: 48px 49px 1fr; gap: 1px; align-items: center; }
.pick svg { width: 18px; height: 18px; margin-left: 2px; }
.check { flex: 0 0 147px; display: flex; align-items: center; gap: 5px; padding-left: 1px; }
.row .w69 { width: 69px; }
.row .w21 { width: 21px; }
.unit { padding-left: 2px; }
.unit-mid { width: 25px; }
.unit-pct { padding-left: 8px; }
.flat { display: flex; gap: 2px; padding: 1px 0 2px; }
.sq { width: 30px; height: 30px; border: 1px solid #707070; border-radius: 3px; background: linear-gradient(#f4f4f4 50%, #dcdcdc); display: flex; align-items: center; justify-content: center; }
.sq svg { width: 24px; height: 24px; }
.sq:disabled { border-color: #adb2b5; background: #f4f4f4; }
.sq:disabled svg { opacity: .6; }

.view { width: calc(100% - 18px); height: calc(100% - 3px); margin: 1px 0 0 10px; min-height: 0; }
.axis { font: 700 9px "Liberation Sans", sans-serif; fill: #fff; }

.dock { display: flex; flex-direction: column; }
.imgwin { border: 3px solid #99b4d1; background: #f0f0f0; }
.imgtitle { height: 24px; display: flex; align-items: center; gap: 4px; padding: 0 4px 2px 2px; background: #b4c8de; }
.plain { flex: none; display: block; }
.plain svg { width: 16px; height: 16px; }
.imgtitle .plain { margin-left: 4px; }
.imgtitle .last { margin-left: 6px; }
.imgbar { height: 25px; display: flex; align-items: center; gap: 1px; padding: 0 11px 0 3px; }
.ok { width: 20px; height: 20px; margin-right: 4px; flex: none; }
.imgbar .mode { flex: 1; text-align: center; text-align-last: center; padding: 0 16px 0 0; border-top-color: #e2e3ea; }
.cell { width: 56px; height: 25px; border: 1px solid #a0a0a0; flex: none; }
.cell-wide { width: 80px; margin-right: 3px; }
.faint { opacity: .65; }
.imgbody { display: flex; padding: 3px 0 0 2px; }
.film { flex: 1; min-width: 0; height: 298px; image-rendering: pixelated; }
.strip { width: 32px; display: flex; flex-direction: column; justify-content: flex-end; align-items: center; gap: 6px; padding: 0 0 1px 1px; }
.strip svg { width: 24px; height: 24px; }
.strip .plain:last-child svg { width: 20px; height: 24px; }
.imgfoot { height: 33px; display: flex; align-items: center; gap: 2px; padding: 1px 3px 0 2px; }
.imgfoot .w51 { width: 50px; height: 20px; padding: 0; text-align: center; flex: none; }
.rlabel { width: 70px; }
.imgfoot .sqon { width: 30px; height: 28px; display: flex; align-items: center; justify-content: center; }
.sqon svg, .foot svg { width: 24px; height: 24px; }
.foot { width: 26px; }
.spin { display: flex; height: 20px; width: 50px; background: #fff; border: 1px solid #e2e3ea; align-items: center; }
.spin input:not([type]) { border: 0; padding: 0 1px; flex: 1; background: none; }
.spinb { display: flex; flex-direction: column; gap: 1px; }
.spinb button { width: 14px; height: 8px; border: 1px solid #b5b5b5; background: #f0f0f0; }
.spinb svg { width: 12px; height: 6px; }
.tail { flex: 1; display: flex; justify-content: space-between; padding: 0 2px 0 5px; }
.tail svg { width: 22px; height: 22px; }
.hint { flex: 1; display: flex; align-items: center; justify-content: center; padding: 4px 2px 0 0; text-align: center; font: 700 16px/19px "Liberation Sans", Arial, sans-serif; color: #c8c8c8; }

.status { height: 23px; display: flex; gap: 1px; padding: 1px 0; }
.msg { width: 424px; border: 1px solid #a0a0a0; box-shadow: inset -1px -1px #fff; }
.bar { flex: 1; border: 1px solid #b2b2b2; background: linear-gradient(#ededed, #dcdcdc 30%, #c8c8c8 35%, #cdcdcd); }
```

FILE: film.js
```js
const canvas = document.getElementById('film-image');
const ctx = canvas.getContext('2d');
const { width, height } = canvas;
const image = ctx.createImageData(width, height);

// grey level by horizontal position (0..1)
const profile = [
  [0, 74], [0.05, 78], [0.11, 98], [0.16, 122], [0.22, 145], [0.32, 162], [0.40, 178],
  [0.43, 195], [0.46, 220], [0.50, 228], [0.54, 218], [0.58, 192], [0.63, 174], [0.72, 160], [0.78, 145],
  [0.83, 116], [0.88, 90], [0.93, 74], [1, 70],
];

function level(t) {
  for (let i = 1; i < profile.length; i++) {
    const [x1, v1] = profile[i];
    const [x0, v0] = profile[i - 1];
    if (t <= x1) return v0 + (v1 - v0) * (t - x0) / (x1 - x0);
  }
  return 70;
}

let seed = 12345;
function random() {
  seed = (seed * 1664525 + 1013904223) % 4294967296;
  return seed / 4294967296;
}

for (let y = 0; y < height; y++) {
  for (let x = 0; x < width; x++) {
    let v = level(x / (width - 1));
    const d = Math.hypot(x - width / 2 + 0.5, y - height / 2 + 0.5);
    const hole = 8 + 76 * Math.pow(Math.min(d / 8, 1), 2);
    const mix = Math.min(Math.max((d - 7) / 1.8, 0), 1);
    v = hole * (1 - mix) + v * mix;
    const noise = (random() + random() + random() - 1.5) * (d < 8 ? 7 : 14);
    const i = (y * width + x) * 4;
    image.data[i] = image.data[i + 1] = image.data[i + 2] = v + noise;
    image.data[i + 3] = 255;
  }
}
ctx.putImageData(image, 0, 0);
```
